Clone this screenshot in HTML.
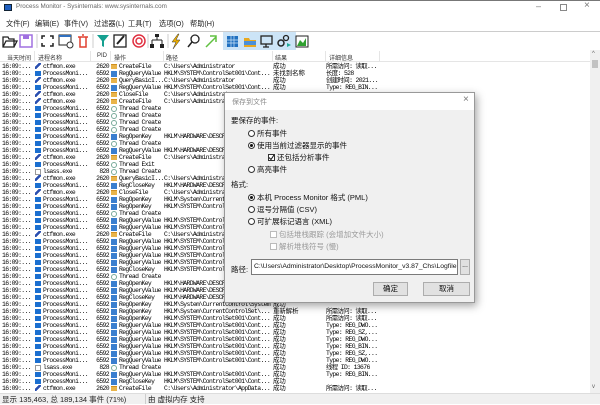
<!DOCTYPE html>
<html><head><meta charset="utf-8"><style>
*{margin:0;padding:0;box-sizing:border-box}
body{width:600px;height:404px;overflow:hidden;background:#fff;position:relative;font-family:"Liberation Sans","Noto Sans CJK SC",sans-serif}
.a{position:absolute}
.r{position:absolute;left:0;height:7px;width:590px;font:6.4px/7px "Liberation Mono","Noto Sans CJK SC",monospace;letter-spacing:-0.62px;white-space:nowrap;color:#000}
.r span{position:absolute;top:0}
.t{left:2px}.p{left:43px}.d{left:94px;width:15px;text-align:right}.o{left:119px}.pa{left:164px;width:107px;overflow:hidden}.rs{left:273px;letter-spacing:0}.de{left:326px}
.pi{left:35px;top:1px!important;width:6px;height:5px;background:#1b6fd0}
.pc{left:35px;width:6px;height:6px;background:linear-gradient(135deg,#fff 30%,#2a4fb0 30%,#2a4fb0 60%,#fff 60%)}
.pl{left:35px;top:1px!important;width:6px;height:6px;border:1px solid #999;background:#fff}
.fi{left:111px;top:1px!important;width:6px;height:5px;background:#e9b44a;border-top:1px solid #d09020}
.ri{left:111px;top:1px!important;width:6px;height:6px;background:#3a7fcf}
.ti{left:111px;top:1px!important;width:6px;height:6px;border:1px solid #7a9;border-radius:50%}
.menu span{position:absolute;top:19px;font-size:7.2px;color:#222}
.hd span{position:absolute;top:53px;font-size:6px;color:#333}
.dlg{font-size:7.5px;color:#111}
.rad{position:absolute;width:7px;height:7px;border:1px solid #333;border-radius:50%;background:#fff}
.rad.on::after{content:"";position:absolute;left:1px;top:1px;width:3px;height:3px;border-radius:50%;background:#111}
.chk{position:absolute;width:7px;height:7px;border:1px solid #333;background:#fff}
</style></head><body>
<div class="a" style="left:0;top:0;width:600px;height:1px;background:#777"></div>
<div class="a" style="left:4px;top:4px;width:8px;height:7px;background:#1f5fbf;border:1px solid #123"></div>
<div class="a" style="left:16px;top:3px;font-size:6.3px;color:#666">Process Monitor - Sysinternals: www.sysinternals.com</div>
<div class="a" style="left:536px;top:1px;font-size:9px;color:#777">–</div>
<div class="a" style="left:560px;top:4px;width:7px;height:7px;border:1px solid #888"></div>
<div class="a" style="left:584px;top:0px;font-size:10px;color:#777">×</div>
<div class="menu">
<span style="left:6px">文件(F)</span><span style="left:35px">编辑(E)</span><span style="left:64px">事件(V)</span><span style="left:94px">过滤器(L)</span><span style="left:128px">工具(T)</span><span style="left:159px">选项(O)</span><span style="left:190px">帮助(H)</span>
</div>
<div class="a" style="left:0;top:31px;width:600px;height:1px;background:#ccc"></div>
<div class="a" style="left:223px;top:32px;width:73px;height:18px;background:#cce4f7"></div>
<svg class="a" style="left:0;top:32px" width="320" height="18" viewBox="0 0 320 18">
<g fill="none" stroke="#222" stroke-width="1.3">
<path d="M3 5h5l1 2h5v8H3z M3 15l3-6h11l-3 6"/>
</g>
<rect x="20" y="3" width="12" height="12" fill="none" stroke="#a070e0" stroke-width="1.5"/><rect x="23" y="3" width="6" height="4" fill="#a070e0"/>
<line x1="37" y1="2" x2="37" y2="16" stroke="#ccc"/>
<path d="M42 7V4h3M50 4h3v3M53 11v3h-3M45 14h-3v-3" stroke="#222" stroke-width="1.5" fill="none"/>
<rect x="59" y="3" width="12" height="10" fill="none" stroke="#222"/><rect x="59" y="3" width="12" height="2" fill="#3070c0"/><circle cx="70" cy="13" r="3" fill="#fff" stroke="#333"/>
<path d="M78 5h10M80 5v10h6V5M82 3h2" stroke="#e04030" stroke-width="1.5" fill="none"/>
<line x1="93" y1="2" x2="93" y2="16" stroke="#ccc"/>
<path d="M97 3h12l-5 6v6l-2-1V9z" fill="#16a090"/>
<rect x="114" y="3" width="12" height="12" fill="none" stroke="#222" stroke-width="1.3"/><path d="M117 12l7-8" stroke="#222" stroke-width="2"/>
<circle cx="139" cy="9" r="6" fill="none" stroke="#e03040" stroke-width="1.5"/><circle cx="139" cy="9" r="3" fill="none" stroke="#e03040" stroke-width="1.5"/>
<line x1="148" y1="2" x2="148" y2="16" stroke="#ccc"/>
<path d="M157 4v4M152 8h10M152 8v5M162 8v5" stroke="#222" fill="none"/><rect x="155" y="2" width="4" height="3" fill="#222"/><rect x="150" y="12" width="4" height="4" fill="#222"/><rect x="160" y="12" width="4" height="4" fill="#222"/>
<line x1="168" y1="2" x2="168" y2="16" stroke="#ccc"/>
<path d="M178 2l-6 8h4l-3 7 7-9h-4l3-6z" fill="#f0b000" stroke="#333" stroke-width=".5"/>
<circle cx="195" cy="7" r="4" fill="none" stroke="#222" stroke-width="1.3"/><path d="M192 10l-4 5" stroke="#222" stroke-width="1.5"/>
<path d="M206 15l10-10M210 4h6v6" stroke="#60c040" stroke-width="1.5" fill="none"/>
<rect x="227" y="4" width="11" height="11" fill="#2070c0"/><path d="M227 8h11M227 11h11M231 4v11M234 4v11" stroke="#cce4f7" stroke-width=".7"/>
<path d="M244 6h5l1 2h6v7h-12z" fill="#e8a820"/><rect x="244" y="9" width="12" height="4" fill="#4a90d9"/>
<rect x="261" y="4" width="11" height="8" fill="none" stroke="#222" stroke-width="1.3"/><path d="M266 12v3M263 15h6" stroke="#222" stroke-width="1.3"/>
<circle cx="281" cy="11" r="3" fill="none" stroke="#222" stroke-width="1.5"/><circle cx="286" cy="6" r="2.5" fill="none" stroke="#222" stroke-width="1.3"/><path d="M287 11l4 2-4 2z" fill="#2a9"/>
<rect x="296" y="4" width="12" height="11" fill="#fff" stroke="#222"/><path d="M297 14l3-6 3 3 3-5v8z" fill="#30a030"/>
</svg>
<div class="a" style="left:0;top:50px;width:590px;height:12px;border-bottom:1px solid #e5e5e5"></div>
<div class="hd">
<span style="left:7px">当天时间</span><span style="left:38px">进程名称</span><span style="left:97px">PID</span><span style="left:114px">操作</span><span style="left:166px">路径</span><span style="left:275px">结果</span><span style="left:329px">详细信息</span>
</div>
<div class="a" style="left:34px;top:51px;width:1px;height:10px;background:#e5e5e5"></div>
<div class="a" style="left:90px;top:51px;width:1px;height:10px;background:#e5e5e5"></div>
<div class="a" style="left:110px;top:51px;width:1px;height:10px;background:#e5e5e5"></div>
<div class="a" style="left:163px;top:51px;width:1px;height:10px;background:#e5e5e5"></div>
<div class="a" style="left:272px;top:51px;width:1px;height:10px;background:#e5e5e5"></div>
<div class="a" style="left:325px;top:51px;width:1px;height:10px;background:#e5e5e5"></div>
<div class="a" style="left:379px;top:51px;width:1px;height:10px;background:#e5e5e5"></div>
<div class="a" style="left:590px;top:50px;width:10px;height:343px;background:#f0f0f0"></div>
<div class="a" style="left:592px;top:60px;width:6px;height:8px;background:#c2c2c2"></div>
<div class="a" style="left:592px;top:51px;font-size:6px;color:#666">^</div>
<div class="a" style="left:592px;top:384px;font-size:6px;color:#666">v</div>
<div class="r" style="top:63px"><span class="t">16:09:...</span><span class="pc"></span><span class="p">ctfmon.exe</span><span class="d">2620</span><span class="fi"></span><span class="o">CreateFile</span><span class="pa">C:\Users\Administrator</span><span class="rs">成功</span><span class="de">所需访问: 读取...</span></div>
<div class="r" style="top:70px"><span class="t">16:09:...</span><span class="pi"></span><span class="p">ProcessMoni...</span><span class="d">6592</span><span class="ri"></span><span class="o">RegQueryValue</span><span class="pa">HKLM\SYSTEM\ControlSet001\Cont...</span><span class="rs">未找到名称</span><span class="de">长度: 528</span></div>
<div class="r" style="top:77px"><span class="t">16:09:...</span><span class="pc"></span><span class="p">ctfmon.exe</span><span class="d">2620</span><span class="fi"></span><span class="o">QueryBasicI...</span><span class="pa">C:\Users\Administrator</span><span class="rs">成功</span><span class="de">创建时间: 2021...</span></div>
<div class="r" style="top:84px"><span class="t">16:09:...</span><span class="pi"></span><span class="p">ProcessMoni...</span><span class="d">6592</span><span class="ri"></span><span class="o">RegQueryValue</span><span class="pa">HKLM\SYSTEM\ControlSet001\Cont...</span><span class="rs">成功</span><span class="de">Type: REG_BIN...</span></div>
<div class="r" style="top:91px"><span class="t">16:09:...</span><span class="pc"></span><span class="p">ctfmon.exe</span><span class="d">2620</span><span class="fi"></span><span class="o">CloseFile</span><span class="pa">C:\Users\Administrator</span></div>
<div class="r" style="top:98px"><span class="t">16:09:...</span><span class="pc"></span><span class="p">ctfmon.exe</span><span class="d">2620</span><span class="fi"></span><span class="o">CreateFile</span><span class="pa">C:\Users\Administrator</span></div>
<div class="r" style="top:105px"><span class="t">16:09:...</span><span class="pi"></span><span class="p">ProcessMoni...</span><span class="d">6592</span><span class="ti"></span><span class="o">Thread Create</span></div>
<div class="r" style="top:112px"><span class="t">16:09:...</span><span class="pi"></span><span class="p">ProcessMoni...</span><span class="d">6592</span><span class="ti"></span><span class="o">Thread Create</span></div>
<div class="r" style="top:119px"><span class="t">16:09:...</span><span class="pi"></span><span class="p">ProcessMoni...</span><span class="d">6592</span><span class="ti"></span><span class="o">Thread Create</span></div>
<div class="r" style="top:126px"><span class="t">16:09:...</span><span class="pi"></span><span class="p">ProcessMoni...</span><span class="d">6592</span><span class="ti"></span><span class="o">Thread Create</span></div>
<div class="r" style="top:133px"><span class="t">16:09:...</span><span class="pi"></span><span class="p">ProcessMoni...</span><span class="d">6592</span><span class="ri"></span><span class="o">RegOpenKey</span><span class="pa">HKLM\HARDWARE\DESCRIPTION</span></div>
<div class="r" style="top:140px"><span class="t">16:09:...</span><span class="pi"></span><span class="p">ProcessMoni...</span><span class="d">6592</span><span class="ti"></span><span class="o">Thread Create</span></div>
<div class="r" style="top:147px"><span class="t">16:09:...</span><span class="pi"></span><span class="p">ProcessMoni...</span><span class="d">6592</span><span class="ri"></span><span class="o">RegQueryValue</span><span class="pa">HKLM\HARDWARE\DESCRIPTION</span></div>
<div class="r" style="top:154px"><span class="t">16:09:...</span><span class="pc"></span><span class="p">ctfmon.exe</span><span class="d">2620</span><span class="fi"></span><span class="o">CreateFile</span><span class="pa">C:\Users\Administrator</span></div>
<div class="r" style="top:161px"><span class="t">16:09:...</span><span class="pi"></span><span class="p">ProcessMoni...</span><span class="d">6592</span><span class="ti"></span><span class="o">Thread Exit</span></div>
<div class="r" style="top:168px"><span class="t">16:09:...</span><span class="pl"></span><span class="p">lsass.exe</span><span class="d">828</span><span class="ti"></span><span class="o">Thread Create</span></div>
<div class="r" style="top:175px"><span class="t">16:09:...</span><span class="pc"></span><span class="p">ctfmon.exe</span><span class="d">2620</span><span class="fi"></span><span class="o">QueryBasicI...</span><span class="pa">C:\Users\Administrator</span></div>
<div class="r" style="top:182px"><span class="t">16:09:...</span><span class="pi"></span><span class="p">ProcessMoni...</span><span class="d">6592</span><span class="ri"></span><span class="o">RegCloseKey</span><span class="pa">HKLM\HARDWARE\DESCRIPTION</span></div>
<div class="r" style="top:189px"><span class="t">16:09:...</span><span class="pc"></span><span class="p">ctfmon.exe</span><span class="d">2620</span><span class="fi"></span><span class="o">CloseFile</span><span class="pa">C:\Users\Administrator</span></div>
<div class="r" style="top:196px"><span class="t">16:09:...</span><span class="pi"></span><span class="p">ProcessMoni...</span><span class="d">6592</span><span class="ri"></span><span class="o">RegOpenKey</span><span class="pa">HKLM\System\CurrentControlSet</span></div>
<div class="r" style="top:203px"><span class="t">16:09:...</span><span class="pi"></span><span class="p">ProcessMoni...</span><span class="d">6592</span><span class="ri"></span><span class="o">RegOpenKey</span><span class="pa">HKLM\SYSTEM\ControlSet001</span></div>
<div class="r" style="top:210px"><span class="t">16:09:...</span><span class="pi"></span><span class="p">ProcessMoni...</span><span class="d">6592</span><span class="ti"></span><span class="o">Thread Create</span></div>
<div class="r" style="top:217px"><span class="t">16:09:...</span><span class="pi"></span><span class="p">ProcessMoni...</span><span class="d">6592</span><span class="ri"></span><span class="o">RegQueryValue</span><span class="pa">HKLM\SYSTEM\ControlSet001</span></div>
<div class="r" style="top:224px"><span class="t">16:09:...</span><span class="pi"></span><span class="p">ProcessMoni...</span><span class="d">6592</span><span class="ri"></span><span class="o">RegQueryValue</span><span class="pa">HKLM\SYSTEM\ControlSet001</span></div>
<div class="r" style="top:231px"><span class="t">16:09:...</span><span class="pc"></span><span class="p">ctfmon.exe</span><span class="d">2620</span><span class="fi"></span><span class="o">CreateFile</span><span class="pa">C:\Users\Administrator</span></div>
<div class="r" style="top:238px"><span class="t">16:09:...</span><span class="pi"></span><span class="p">ProcessMoni...</span><span class="d">6592</span><span class="ri"></span><span class="o">RegQueryValue</span><span class="pa">HKLM\SYSTEM\ControlSet001</span></div>
<div class="r" style="top:245px"><span class="t">16:09:...</span><span class="pi"></span><span class="p">ProcessMoni...</span><span class="d">6592</span><span class="ri"></span><span class="o">RegQueryValue</span><span class="pa">HKLM\SYSTEM\ControlSet001</span></div>
<div class="r" style="top:252px"><span class="t">16:09:...</span><span class="pi"></span><span class="p">ProcessMoni...</span><span class="d">6592</span><span class="ri"></span><span class="o">RegQueryValue</span><span class="pa">HKLM\SYSTEM\ControlSet001</span></div>
<div class="r" style="top:259px"><span class="t">16:09:...</span><span class="pi"></span><span class="p">ProcessMoni...</span><span class="d">6592</span><span class="ri"></span><span class="o">RegQueryValue</span><span class="pa">HKLM\SYSTEM\ControlSet001</span></div>
<div class="r" style="top:266px"><span class="t">16:09:...</span><span class="pi"></span><span class="p">ProcessMoni...</span><span class="d">6592</span><span class="ri"></span><span class="o">RegCloseKey</span><span class="pa">HKLM\SYSTEM\ControlSet001</span></div>
<div class="r" style="top:273px"><span class="t">16:09:...</span><span class="pi"></span><span class="p">ProcessMoni...</span><span class="d">6592</span><span class="ti"></span><span class="o">Thread Create</span></div>
<div class="r" style="top:280px"><span class="t">16:09:...</span><span class="pi"></span><span class="p">ProcessMoni...</span><span class="d">6592</span><span class="ri"></span><span class="o">RegOpenKey</span><span class="pa">HKLM\HARDWARE\DESCRIPTION</span></div>
<div class="r" style="top:287px"><span class="t">16:09:...</span><span class="pi"></span><span class="p">ProcessMoni...</span><span class="d">6592</span><span class="ri"></span><span class="o">RegQueryValue</span><span class="pa">HKLM\HARDWARE\DESCRIPTION</span></div>
<div class="r" style="top:294px"><span class="t">16:09:...</span><span class="pi"></span><span class="p">ProcessMoni...</span><span class="d">6592</span><span class="ri"></span><span class="o">RegCloseKey</span><span class="pa">HKLM\HARDWARE\DESCRIPTION</span></div>
<div class="r" style="top:301px"><span class="t">16:09:...</span><span class="pi"></span><span class="p">ProcessMoni...</span><span class="d">6592</span><span class="ri"></span><span class="o">RegOpenKey</span><span class="pa">HKLM\System\CurrentControl\System\Syst...</span><span class="rs">成功</span></div>
<div class="r" style="top:308px"><span class="t">16:09:...</span><span class="pi"></span><span class="p">ProcessMoni...</span><span class="d">6592</span><span class="ri"></span><span class="o">RegOpenKey</span><span class="pa">HKLM\System\CurrentControlSet\...</span><span class="rs">重新解析</span><span class="de">所需访问: 读取...</span></div>
<div class="r" style="top:315px"><span class="t">16:09:...</span><span class="pi"></span><span class="p">ProcessMoni...</span><span class="d">6592</span><span class="ri"></span><span class="o">RegOpenKey</span><span class="pa">HKLM\SYSTEM\ControlSet001\Cont...</span><span class="rs">成功</span><span class="de">所需访问: 读取...</span></div>
<div class="r" style="top:322px"><span class="t">16:09:...</span><span class="pi"></span><span class="p">ProcessMoni...</span><span class="d">6592</span><span class="ri"></span><span class="o">RegQueryValue</span><span class="pa">HKLM\SYSTEM\ControlSet001\Cont...</span><span class="rs">成功</span><span class="de">Type: REG_DWO...</span></div>
<div class="r" style="top:329px"><span class="t">16:09:...</span><span class="pi"></span><span class="p">ProcessMoni...</span><span class="d">6592</span><span class="ri"></span><span class="o">RegQueryValue</span><span class="pa">HKLM\SYSTEM\ControlSet001\Cont...</span><span class="rs">成功</span><span class="de">Type: REG_SZ,...</span></div>
<div class="r" style="top:336px"><span class="t">16:09:...</span><span class="pi"></span><span class="p">ProcessMoni...</span><span class="d">6592</span><span class="ri"></span><span class="o">RegQueryValue</span><span class="pa">HKLM\SYSTEM\ControlSet001\Cont...</span><span class="rs">成功</span><span class="de">Type: REG_DWO...</span></div>
<div class="r" style="top:343px"><span class="t">16:09:...</span><span class="pi"></span><span class="p">ProcessMoni...</span><span class="d">6592</span><span class="ri"></span><span class="o">RegQueryValue</span><span class="pa">HKLM\SYSTEM\ControlSet001\Cont...</span><span class="rs">成功</span><span class="de">Type: REG_BIN...</span></div>
<div class="r" style="top:350px"><span class="t">16:09:...</span><span class="pi"></span><span class="p">ProcessMoni...</span><span class="d">6592</span><span class="ri"></span><span class="o">RegQueryValue</span><span class="pa">HKLM\SYSTEM\ControlSet001\Cont...</span><span class="rs">成功</span><span class="de">Type: REG_SZ,...</span></div>
<div class="r" style="top:357px"><span class="t">16:09:...</span><span class="pi"></span><span class="p">ProcessMoni...</span><span class="d">6592</span><span class="ri"></span><span class="o">RegQueryValue</span><span class="pa">HKLM\SYSTEM\ControlSet001\Cont...</span><span class="rs">成功</span><span class="de">Type: REG_DWO...</span></div>
<div class="r" style="top:364px"><span class="t">16:09:...</span><span class="pl"></span><span class="p">lsass.exe</span><span class="d">828</span><span class="ti"></span><span class="o">Thread Create</span><span class="rs">成功</span><span class="de">线程 ID: 13676</span></div>
<div class="r" style="top:371px"><span class="t">16:09:...</span><span class="pi"></span><span class="p">ProcessMoni...</span><span class="d">6592</span><span class="ri"></span><span class="o">RegQueryValue</span><span class="pa">HKLM\SYSTEM\ControlSet001\Cont...</span><span class="rs">成功</span><span class="de">Type: REG_BIN...</span></div>
<div class="r" style="top:378px"><span class="t">16:09:...</span><span class="pi"></span><span class="p">ProcessMoni...</span><span class="d">6592</span><span class="ri"></span><span class="o">RegCloseKey</span><span class="pa">HKLM\SYSTEM\ControlSet001\Cont...</span><span class="rs">成功</span></div>
<div class="r" style="top:385px"><span class="t">16:09:...</span><span class="pc"></span><span class="p">ctfmon.exe</span><span class="d">2620</span><span class="fi"></span><span class="o">CreateFile</span><span class="pa">C:\Users\Administrator\AppData...</span><span class="rs">成功</span><span class="de">所需访问: 读取...</span></div>
<div class="a" style="left:0;top:393px;width:600px;height:11px;background:#f0f0f0;border-top:1px solid #ddd"></div>
<div class="a" style="left:2px;top:394px;font-size:7.5px;color:#222">显示 135,463, 总 189,134 事件 (71%)</div>
<div class="a" style="left:145px;top:394px;width:1px;height:10px;background:#ccc"></div>
<div class="a" style="left:148px;top:394px;font-size:7.5px;color:#222">由 虚拟内存 支持</div>
<div class="a dlg" style="left:224px;top:92px;width:251px;height:211px;background:#f0f0f0;border:1px solid #999;box-shadow:2px 3px 8px rgba(0,0,0,.35)">
<div class="a" style="left:0;top:0;width:249px;height:17px;background:#fff"></div>
<div class="a" style="left:7px;top:4px;font-size:7px;color:#888">保存到文件</div>
<div class="a" style="left:238px;top:1px;font-size:10px;color:#777">×</div>
<div class="a" style="left:6px;top:22px">要保存的事件:</div>
<div class="rad" style="left:23px;top:37px"></div><div class="a" style="left:32px;top:35px">所有事件</div>
<div class="rad on" style="left:23px;top:49px"></div><div class="a" style="left:32px;top:47px">使用当前过滤器显示的事件</div>
<div class="chk" style="left:43px;top:61px"><svg width="5" height="5" style="position:absolute;left:0;top:0"><path d="M0 2.5l2 2L5 0" stroke="#111" fill="none"/></svg></div><div class="a" style="left:52px;top:59px">还包括分析事件</div>
<div class="rad" style="left:23px;top:73px"></div><div class="a" style="left:32px;top:71px">高亮事件</div>
<div class="a" style="left:6px;top:86px">格式:</div>
<div class="rad on" style="left:23px;top:101px"></div><div class="a" style="left:32px;top:99px">本机 Process Monitor 格式 (PML)</div>
<div class="rad" style="left:23px;top:113px"></div><div class="a" style="left:32px;top:111px">逗号分隔值 (CSV)</div>
<div class="rad" style="left:23px;top:125px"></div><div class="a" style="left:32px;top:123px">可扩展标记语言 (XML)</div>
<div class="chk" style="left:45px;top:138px;border-color:#bbb"></div><div class="a" style="left:54px;top:136px;color:#999">包括堆栈跟踪 (会增加文件大小)</div>
<div class="chk" style="left:45px;top:150px;border-color:#bbb"></div><div class="a" style="left:54px;top:148px;color:#999">解析堆栈符号 (慢)</div>
<div class="a" style="left:6px;top:171px">路径:</div>
<div class="a" style="left:26px;top:166px;width:207px;height:16px;background:#fff;border:1px solid #7a7a7a;font-size:6.8px;line-height:14px;padding-left:2px;white-space:nowrap;overflow:hidden">C:\Users\Administrator\Desktop\ProcessMonitor_v3.87_Chs\Logfile.PML</div>
<div class="a" style="left:235px;top:166px;width:10px;height:16px;border:1px solid #adadad;background:#e1e1e1;font-size:7px;text-align:center;line-height:12px">...</div>
<div class="a" style="left:148px;top:189px;width:35px;height:14px;border:1px solid #adadad;background:#e1e1e1;text-align:center;line-height:12px">确定</div>
<div class="a" style="left:198px;top:189px;width:47px;height:14px;border:1px solid #adadad;background:#e1e1e1;text-align:center;line-height:12px">取消</div>
</div>
</body></html>
